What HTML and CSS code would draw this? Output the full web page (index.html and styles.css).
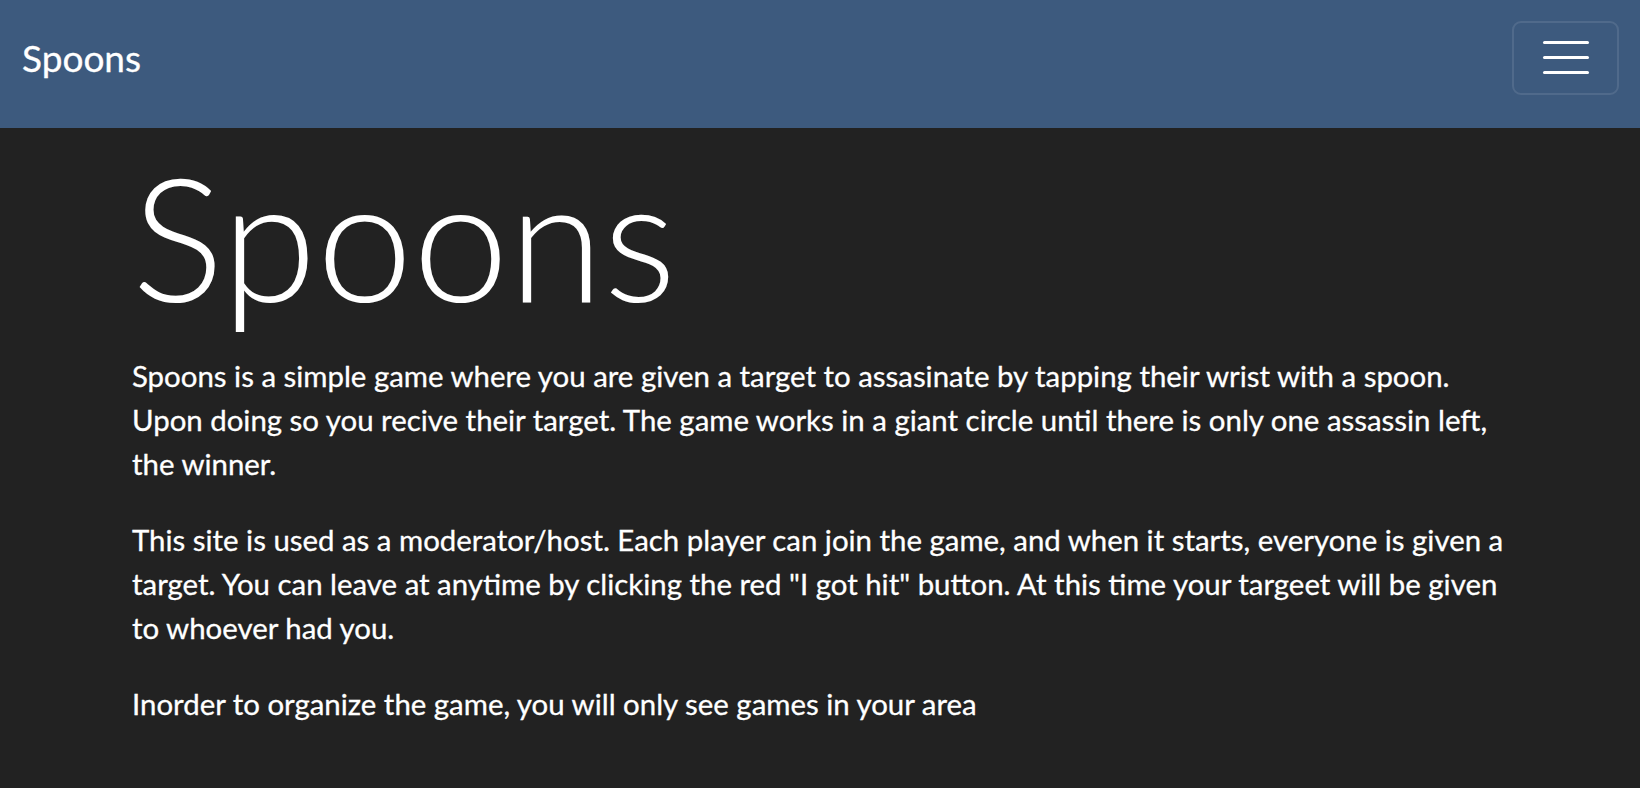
FILE: index.html
```html
<!DOCTYPE html>
<html lang="en">
<head>
<meta charset="utf-8">
<title>Spoons</title>
<link rel="stylesheet" href="styles.css">
</head>
<body>
<nav class="navbar">
  <a class="brand" href="#">Spoons</a>
  <button class="toggler" type="button" aria-label="Toggle navigation">
    <span class="bar"></span>
    <span class="bar"></span>
    <span class="bar"></span>
  </button>
</nav>
<main class="content">
  <h1 class="display">Spoons</h1>
  <p>Spoons is a simple game where you are given a target to assasinate by tapping their wrist with a spoon. Upon doing so you recive their target. The game works in a giant circle until there is only one assassin left, the winner.</p>
  <p>This site is used as a moderator/host. Each player can join the game, and when it starts, everyone is given a target. You can leave at anytime by clicking the red "I got hit" button. At this time your targeet will be given to whoever had you.</p>
  <p>Inorder to organize the game, you will only see games in your area</p>
</main>
</body>
</html>
```

FILE: styles.css
```css
* { box-sizing: border-box; }
html, body {
  margin: 0;
  padding: 0;
}
body {
  background: #222222;
  color: #ffffff;
  font-family: Lato, "Noto Sans", sans-serif;
  font-size: 29.4px;
  line-height: 44px;
  height: 788px;
  overflow: hidden;
}
.navbar {
  height: 128px;
  background: #3d5a7e;
  display: flex;
  align-items: center;
  justify-content: space-between;
  padding: 0 21px 13px 22px;
}
.brand {
  color: #ffffff;
  text-decoration: none;
  font-size: 37px;
  line-height: 1;
  -webkit-text-stroke: 0.3px #ffffff;
}
.toggler {
  width: 107px;
  height: 74px;
  background: transparent;
  border: 2px solid rgba(255, 255, 255, 0.1);
  border-radius: 9px;
  display: flex;
  flex-direction: column;
  align-items: center;
  justify-content: center;
  gap: 12px;
  padding: 0;
}
.bar {
  display: block;
  width: 46px;
  height: 3px;
  background: #ffffff;
  border-radius: 1.5px;
}
.content {
  padding: 5px 132px 0;
}
.display {
  margin: 0 0 15px;
  font-size: 172px;
  font-weight: 300;
  line-height: 1.2;
}
.content p {
  margin: 0 0 32px;
  -webkit-text-stroke: 0.3px #ffffff;
}
```
